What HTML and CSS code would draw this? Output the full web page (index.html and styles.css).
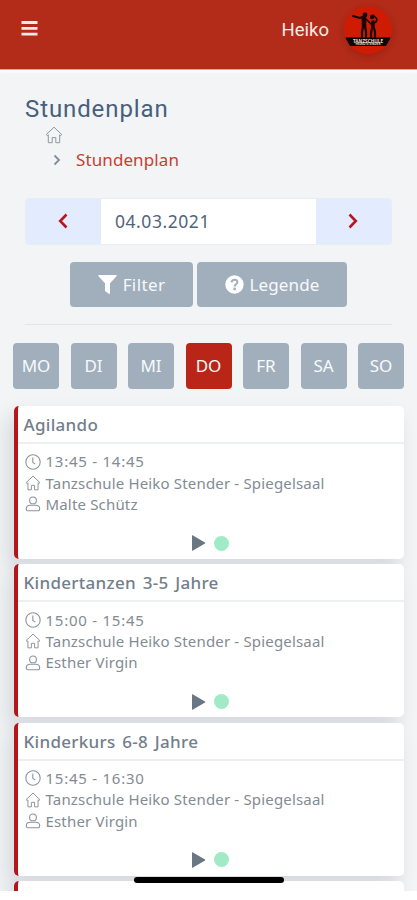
FILE: index.html
```
<!DOCTYPE html>
<html lang="de">
<head>
	<meta charset="utf-8">
	<title>Stundenplan</title>
	<meta name="viewport" content="width=device-width, initial-scale=1.0">
	<link rel="stylesheet" href="styles.css">
</head>
<body>
	<svg width="0" height="0" class="sprite">
		<symbol id="home" viewBox="0 0 18 18">
			<path d="M1.200 8.600 9 1.200l7.800 7.400-1.200 1-.9-.8v7.900h-3.900v-5.100H7.200v5.100H3.300V8.800l-.9.8z"/>
		</symbol>
		<symbol id="clock" viewBox="0 0 16 16">
			<circle cx="8" cy="8" r="7.200"/>
			<path d="M7.800 3.500v5l2.500 1.600"/>
		</symbol>
		<symbol id="user" viewBox="0 0 16 16">
			<circle cx="8" cy="4.400" r="3.400"/>
			<path d="M5.200 9.200h5.600c2.400 0 3.900 1.400 3.900 3.400 0 1.500-.4 2.200-1.400 2.200H2.700c-1 0-1.400-.7-1.400-2.200 0-2 1.500-3.400 3.900-3.400z"/>
		</symbol>
		<symbol id="play" viewBox="0 0 15 16">
			<path d="M1 .6v14.800q0 .6.6.3L14 8.500q.6-.5 0-1L1.600.3Q1 0 1 .6z"/>
		</symbol>
	</svg>

	<div class="app">
		<header class="navbar">
			<svg class="menu" viewBox="0 0 16 15"><path d="M0 1.500h16M0 7.300h16M0 13.200h16"/></svg>
			<div class="profile">
				<span class="username">Heiko</span>
				<svg class="avatar" viewBox="0 0 48 48">
					<circle cx="24" cy="24" r="24" fill="#cf1b02"/>
					<g fill="none" stroke="#180502" stroke-linecap="round" stroke-linejoin="round">
						<path d="M9 10l7 2 5-2" stroke-width="2.200"/>
						<path d="M20 12v8" stroke-width="4.500"/>
						<path d="M19 21l-1 5v5M21 20l1 6v5" stroke-width="2.200"/>
						<path d="M22 13l5 5 5-2 1-3-4-4" stroke-width="1.600"/>
						<path d="M29 16v5" stroke-width="3.600"/>
						<path d="M28 22l-1 5v4M30 22l1 4v5" stroke-width="2.200"/>
					</g>
					<circle cx="21" cy="9" r="2.400" fill="#180502"/>
					<circle cx="28" cy="11" r="2.200" fill="#180502"/>
					<path d="M1 31.500h46l-5 8.500H6z" fill="#100403"/>
					<text x="24" y="36.500" textLength="30" lengthAdjust="spacingAndGlyphs">TANZSCHULE</text>
					<text x="24" y="39.200" class="sub" textLength="25" lengthAdjust="spacingAndGlyphs">HEIKO STENDER</text>
				</svg>
			</div>
		</header>

		<main class="content">
			<h1>Stundenplan</h1>
			<nav class="breadcrumb">
				<svg class="crumb-home"><use href="#home"/></svg>
				<div class="crumb">
					<svg class="crumb-arrow" viewBox="0 0 8 12"><path d="M1.500 1.500 6 6l-4.500 4.500"/></svg>
					<a>Stundenplan</a>
				</div>
			</nav>

			<div class="datepicker">
				<button><svg viewBox="0 0 10 16"><path d="M8.500 1.500 2.200 8l6.300 6.500"/></svg></button>
				<div class="date"><span>04.03.2021</span></div>
				<button><svg viewBox="0 0 10 16"><path d="M1.500 1.500 7.800 8l-6.300 6.500"/></svg></button>
			</div>

			<div class="actions">
				<button class="btn filter">
					<svg viewBox="0 0 19 19"><path d="M1 0h17q1.200.2.5 1.200L12 8.200v10q-.3 1.200-1.200.5L7 16V8.200L.5 1.200Q-.2.2 1 0z" fill="#fff"/></svg>
					<span>Filter</span>
				</button>
				<button class="btn legend">
					<svg viewBox="0 0 19 19"><circle cx="9.500" cy="9.500" r="9.200" fill="#fff"/><path d="M6.500 7.300C6.900 3.700 12.600 3.900 12.400 7.200c-.1 2-2.800 2-2.800 4.200" fill="none" stroke="#a1afbd" stroke-width="2"/><circle cx="9.600" cy="14" r="1.400" fill="#a1afbd"/></svg>
					<span>Legende</span>
				</button>
			</div>
			<hr>
		</main>

		<div class="days">
			<button class="btn">MO</button>
			<button class="btn">DI</button>
			<button class="btn">MI</button>
			<button class="btn active">DO</button>
			<button class="btn">FR</button>
			<button class="btn">SA</button>
			<button class="btn">SO</button>
		</div>

		<section class="courses">
			<article class="card">
				<h2>Agilando</h2>
				<ul>
					<li><svg><use href="#clock"/></svg><span class="time">13:45 - 14:45</span></li>
					<li><svg><use href="#home" /></svg><span class="place">Tanzschule Heiko Stender - Spiegelsaal</span></li>
					<li><svg><use href="#user"/></svg><span class="teacher">Malte Schütz</span></li>
				</ul>
				<div class="status"><svg><use href="#play"/></svg><i></i></div>
			</article>
			<article class="card">
				<h2>Kindertanzen 3-5 Jahre</h2>
				<ul>
					<li><svg><use href="#clock"/></svg><span class="time">15:00 - 15:45</span></li>
					<li><svg><use href="#home"/></svg><span class="place">Tanzschule Heiko Stender - Spiegelsaal</span></li>
					<li><svg><use href="#user"/></svg><span class="teacher">Esther Virgin</span></li>
				</ul>
				<div class="status"><svg><use href="#play"/></svg><i></i></div>
			</article>
			<article class="card">
				<h2>Kinderkurs 6-8 Jahre</h2>
				<ul>
					<li><svg><use href="#clock"/></svg><span class="time">15:45 - 16:30</span></li>
					<li><svg><use href="#home"/></svg><span class="place">Tanzschule Heiko Stender - Spiegelsaal</span></li>
					<li><svg><use href="#user"/></svg><span class="teacher">Esther Virgin</span></li>
				</ul>
				<div class="status"><svg><use href="#play"/></svg><i></i></div>
			</article>
			<article class="card"></article>
		</section>
		<div class="home-indicator"></div>
	</div>
</body>
</html>
```
FILE: styles.css
```
* {
	box-sizing: border-box;
}

html, body {
	margin: 0;
	padding: 0;
	background: #fff;
	font-family: "Noto Sans", sans-serif;
	color: #727e8c;
}

svg {
	display: block;
	flex: none;
}

button {
	border: none;
	padding: 0;
	font: inherit;
}

.sprite {
	position: absolute;
}

.app {
	position: relative;
	height: 891px;
	overflow: hidden;
	background: #f2f4f5;
}

.navbar {
	display: flex;
	justify-content: space-between;
	height: 70px;
	padding: 0 25px 0 21px;
	background: #b32b19;
	border-bottom: 1px solid #dba39c;
	box-shadow: 0 2px 3px #fff;
}

.menu {
	width: 17px;
	height: 15px;
	margin-top: 21px;
	stroke: #fbe9e6;
	stroke-width: 2.8;
}

.profile {
	display: flex;
	gap: 15px;
	padding-top: 6px;
}

.username {
	color: #fbe9e6;
	font-family: Roboto, sans-serif;
	font-size: 18.5px;
	line-height: 49px;
}

.avatar {
	width: 48px;
	height: 48px;
	border-radius: 50%;
	box-shadow: 0 2px 6px rgba(80, 10, 0, 0.25);
}

.avatar text {
	fill: #e5d8cc;
	font-size: 5px;
	font-weight: bold;
	text-anchor: middle;
}

.avatar .sub {
	font-size: 2.5px;
}

.content {
	padding: 24px 25px 0;
}

h1 {
	margin: 0;
	font-family: Roboto, sans-serif;
	font-size: 24px;
	font-weight: 400;
	line-height: 30px;
	letter-spacing: 0.9px;
	color: #475f7b;
}

.breadcrumb {
	padding: 2px 0 0 20px;
}

.crumb-home {
	width: 18px;
	height: 18px;
	fill: none;
	stroke: #8d98a3;
}

.crumb {
	display: flex;
	align-items: center;
	gap: 15px;
	height: 26px;
	margin-top: 3px;
	padding-left: 8px;
}

.crumb-arrow {
	width: 8px;
	height: 12px;
	fill: none;
	stroke: #828d99;
	stroke-width: 1.8;
}

.crumb a {
	padding-bottom: 2px;
	color: #c84032;
	font-size: 17px;
	letter-spacing: 0.1px;
}

.datepicker {
	display: flex;
	height: 47px;
	margin-top: 25px;
	border: 1px solid #e7edf3;
	border-radius: 4px;
	overflow: hidden;
}

.datepicker button {
	display: flex;
	align-items: center;
	justify-content: center;
	width: 75px;
	padding-right: 1px;
	padding-bottom: 2px;
	background: #e2ecfe;
}

.datepicker svg {
	width: 10px;
	height: 16px;
	fill: none;
	stroke: #bd1421;
	stroke-width: 2.6;
}

.date {
	flex: 1;
	padding-left: 14px;
	background: #fff;
	color: #52647d;
	font-size: 17.5px;
	line-height: 45px;
	letter-spacing: 0.55px;
}

.actions {
	display: flex;
	justify-content: center;
	gap: 4px;
	margin: 17px 0;
}

.btn {
	display: flex;
	align-items: center;
	justify-content: center;
	height: 45px;
	padding-bottom: 1px;
	border-radius: 4px;
	background: #a1afbd;
	color: #f7fafc;
	font-size: 17px;
}

.btn svg {
	width: 19px;
	height: 19px;
	margin-right: 6px;
}

.filter {
	width: 123px;
	letter-spacing: 0.4px;
}

.legend {
	width: 150px;
	letter-spacing: 0.1px;
}

hr {
	height: 1px;
	margin: 0;
	border: none;
	background: #e2e5e8;
}

.days {
	display: flex;
	justify-content: space-between;
	padding: 18px 13px 0;
}

.days .btn {
	width: 46px;
	height: 46px;
}

.days .active {
	background: #b92617;
}

.courses {
	display: flex;
	flex-direction: column;
	gap: 5.4px;
	padding: 17px 13.5px 0;
}

.card {
	flex: none;
	height: 153px;
	background: #fff;
	border-left: 4px solid #b7151a;
	border-radius: 5px;
	box-shadow: -6px 10px 20px rgba(25, 42, 70, 0.13);
}

.card h2 {
	height: 38px;
	margin: 0;
	padding-left: 6px;
	border-bottom: 2px solid #edf0f1;
	font-size: 17px;
	font-weight: 500;
	line-height: 38px;
	letter-spacing: 0.3px;
	word-spacing: 2px;
}

.card ul {
	margin: 0;
	padding: 7px 0 0 7px;
	list-style: none;
}

.card li {
	display: flex;
	align-items: center;
	gap: 5px;
	height: 21.4px;
	font-size: 15px;
	color: #838b93;
}

.card li span {
	padding-bottom: 1px;
	letter-spacing: 0.17px;
}

.card li .time {
	letter-spacing: 0.75px;
}

.card li svg {
	width: 16px;
	height: 16px;
	fill: none;
	stroke: #8c949c;
	stroke-width: 1.1;
}

/* the house is drawn on an 18px grid */
.card li svg use[href="#home"] {
	stroke-width: 1.1;
}

.status {
	display: flex;
	align-items: center;
	justify-content: center;
	gap: 8px;
	margin-top: 20px;
	padding-right: 2px;
}

.status svg {
	width: 15px;
	height: 16px;
	fill: #697684;
}

.status i {
	width: 15px;
	height: 15px;
	border-radius: 50%;
	background: #a0eac8;
}

.home-indicator {
	position: absolute;
	left: 134px;
	bottom: 8px;
	width: 150px;
	height: 6px;
	border-radius: 3px;
	background: #000;
}
```
